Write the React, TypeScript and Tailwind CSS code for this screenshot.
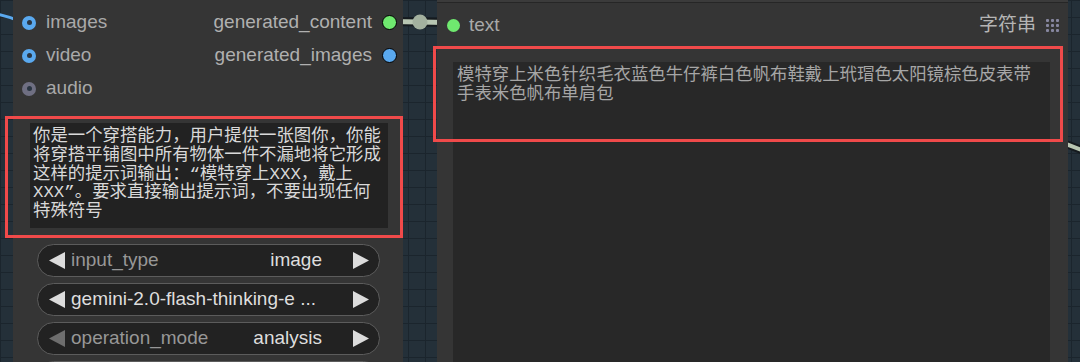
import React from "react";

const sans = "font-['Liberation_Sans','Noto_Sans_CJK_SC',sans-serif]";
const mono = "font-['Liberation_Mono','Noto_Sans_CJK_SC',monospace]";

type Tone = "blue" | "green" | "grey";

function InputDot({ tone }: { tone: Tone }) {
  const bg = tone === "blue" ? "bg-[#5aa9ef]" : "bg-[#6f6f82]";
  return (
    <span className={`flex h-[14px] w-[14px] shrink-0 items-center justify-center rounded-full ${bg}`}>
      <span className="h-[5px] w-[5px] rounded-full bg-[#2a3542]" />
    </span>
  );
}

function OutputDot({ tone }: { tone: Tone }) {
  const bg = tone === "green" ? "bg-[#6fe96f]" : "bg-[#5aa9ef]";
  return <span className={`h-[15px] w-[15px] shrink-0 rounded-full border-[1.5px] border-black ${bg}`} />;
}

function Arrow({ dir, dim }: { dir: "left" | "right"; dim?: boolean }) {
  return (
    <svg width="16" height="17" viewBox="0 0 16 17" className="shrink-0">
      <polygon
        points={dir === "left" ? "16,0 16,17 0,8.5" : "0,0 0,17 16,8.5"}
        fill={dim ? "#6e6e6e" : "#dcdcdc"}
      />
    </svg>
  );
}

function Widget({ label, value, dim }: { label?: string; value: string; dim?: boolean }) {
  return (
    <div className="flex h-[33px] items-center rounded-full border border-[#5c5c5c] bg-[#222222] pl-[11px] pr-[10px] text-[19px]">
      <Arrow dir="left" dim={dim} />
      {label ? (
        <>
          <span className="ml-[6px] text-[#979797]">{label}</span>
          <span className="flex-1" />
          <span className="mr-[31px] text-[#dedede]">{value}</span>
        </>
      ) : (
        <span className="ml-[6px] flex-1 text-[#dedede]">{value}</span>
      )}
      <Arrow dir="right" />
    </div>
  );
}

function GripIcon() {
  return (
    <div className="grid grid-cols-3 gap-[2px]">
      {Array.from({ length: 9 }).map((_, i) => (
        <span key={i} className="h-[3px] w-[3px] rounded-[1px] bg-[#8787a0]" />
      ))}
    </div>
  );
}

const promptText = [
  "你是一个穿搭能力，用户提供一张图你，你能",
  "将穿搭平铺图中所有物体一件不漏地将它形成",
  "这样的提示词输出：“模特穿上XXX，戴上",
  "XXX”。要求直接输出提示词，不要出现任何",
  "特殊符号",
].join("\n");

const resultText = [
  "模特穿上米色针织毛衣蓝色牛仔裤白色帆布鞋戴上玳瑁色太阳镜棕色皮表带",
  "手表米色帆布单肩包",
].join("\n");

export default function App() {
  return (
    <div
      className={`relative flex h-[362px] w-[1080px] overflow-hidden bg-[#243039] bg-[linear-gradient(to_right,#1b252d_1px,transparent_1px),linear-gradient(to_bottom,#1b252d_1px,transparent_1px)] bg-size-[17px_17px] ${sans}`}
    >
      {/* links */}
      <svg className="pointer-events-none absolute inset-0" width="1080" height="362">
        <path d="M-4 14 Q8 16 22 22" stroke="#5aa9ef" strokeWidth="3" fill="none" />
        <line x1="392" y1="21.5" x2="446" y2="22.5" stroke="#151a1e" strokeWidth="9" />
        <line x1="392" y1="21.5" x2="446" y2="22.5" stroke="#b8c6b2" strokeWidth="5" />
        <circle cx="420" cy="22" r="7.5" fill="#a3b19f" />
        <path d="M1060 142 Q1072 146 1084 151" stroke="#151a1e" strokeWidth="8" fill="none" />
        <path d="M1060 142 Q1072 146 1084 151" stroke="#b8c6b2" strokeWidth="4" fill="none" />
      </svg>

      <div className="w-[13px] shrink-0" />

      {/* left node */}
      <div className="relative w-[390px] shrink-0 bg-[#353535] pt-[6px]">
        <div className="flex h-[33px] items-center pl-[9px] pr-[6px] text-[19px]">
          <InputDot tone="blue" />
          <span className="ml-[10px] text-[#a9a9a9]">images</span>
          <span className="flex-1" />
          <span className="mr-[10px] text-[#b0b0b0]">generated_content</span>
          <OutputDot tone="green" />
        </div>
        <div className="flex h-[33px] items-center pl-[9px] pr-[6px] text-[19px]">
          <InputDot tone="blue" />
          <span className="ml-[10px] text-[#a9a9a9]">video</span>
          <span className="flex-1" />
          <span className="mr-[10px] text-[#b0b0b0]">generated_images</span>
          <OutputDot tone="blue" />
        </div>
        <div className="flex h-[33px] items-center pl-[9px] pr-[6px] text-[19px]">
          <InputDot tone="grey" />
          <span className="ml-[10px] text-[#a9a9a9]">audio</span>
        </div>

        <div className="relative ml-[17px] mr-[15px] mt-[18px]">
          <div
            className={`h-[105px] whitespace-pre bg-[#222222] pl-[3px] pt-[5px] text-[17.4px] leading-[18.75px] text-[#d9d9d9] ${mono}`}
          >
            {promptText}
          </div>
          <div className="pointer-events-none absolute -bottom-[10px] -left-[25px] -right-[15px] -top-[7px] border-[3px] border-[#f04a4a]" />
        </div>

        <div className="ml-[24px] mr-[23px] mt-[16px] flex flex-col gap-[6px]">
          <Widget label="input_type" value="image" />
          <Widget value="gemini-2.0-flash-thinking-e ..." />
          <Widget label="operation_mode" value="analysis" dim />
          <div className="h-[33px] rounded-full border border-[#5c5c5c] bg-[#222222]" />
        </div>
      </div>

      <div className="w-[34px] shrink-0" />

      {/* right node */}
      <div className="relative flex w-[631px] shrink-0 flex-col bg-[#353535]">
        <div className="h-[2px] bg-[#3b3b3b]" />
        <div className="h-px bg-[#262626]" />
        <div className="mt-[5px] flex h-[34px] items-center pl-[10px] pr-[9px] text-[19px]">
          <span className="h-[13px] w-[13px] rounded-full bg-[#6fe96f]" />
          <span className="ml-[9px] text-[#a9a9a9]">text</span>
          <span className="flex-1" />
          <span className="mr-[10px] text-[#b4b4b4]">字符串</span>
          <GripIcon />
        </div>
        <div
          className={`ml-[16px] mr-[18px] mt-[20px] flex-1 whitespace-pre bg-[#282828] pl-[4px] pt-[4px] text-[17.4px] leading-[19px] text-[#a6a6a6] ${mono}`}
        >
          {resultText}
        </div>
        <div className="pointer-events-none absolute -left-[4px] top-[46px] h-[96px] w-[630px] border-[3px] border-[#f04a4a]" />
      </div>
    </div>
  );
}
